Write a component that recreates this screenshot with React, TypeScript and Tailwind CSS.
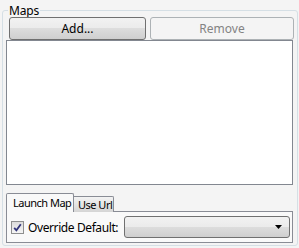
import React from 'react';

const font = { fontFamily: '"Segoe UI", "Noto Sans", "Open Sans", sans-serif' };

const btnFace = 'bg-[linear-gradient(#f2f2f2_0%,#ebebeb_50%,#dddddd_50%,#cfcfcf_100%)]';

export default function App() {
  return (
    <div
      className="w-[299px] h-[248px] bg-[#f4f4f4] text-[12px] text-black overflow-hidden pt-[3px] pl-[2px]"
      style={font}
    >
      <fieldset className="w-[295px] h-[243px] border border-[#d5dfe5] rounded-[3px] px-[3px] pb-[2px]">
        <legend className="ml-[2px] px-[1px] leading-[15px] text-[12px] tracking-[-0.2px]">Maps</legend>
        <div className="flex gap-[4px] pl-[3px] mt-[-1px] h-[23px]">
          <button
            className={`w-[137px] h-[23px] border border-[#707070] rounded-[3px] ${btnFace} leading-[20px] text-[12px]`}
          >
            Add...
          </button>
          <button
            disabled
            className="w-[144px] h-[23px] border border-[#adb2b5] rounded-[3px] bg-[#f4f4f4] text-[#838383] leading-[20px] text-[12px]"
          >
            Remove
          </button>
        </div>
        <div className="w-[287px] h-[145px] bg-white border border-[#828790]" />
        <div className="mt-[8px] w-[287px]">
          <div className="flex items-end h-[19px]">
            <div className="shrink-0 whitespace-nowrap w-[68px] h-[19px] border border-b-0 border-[#898c95] bg-[#f9f9f9] text-[11px] tracking-[-0.5px] leading-[17px] pl-[6px] rounded-t-[2px] relative z-10">
              Launch Map
            </div>
            <div className="shrink-0 whitespace-nowrap w-[40px] h-[16px] border border-l-0 border-b-0 border-[#898c95] bg-[linear-gradient(#f3f3f3,#d5d5d5)] text-[11px] tracking-[-0.5px] leading-[15px] pl-[4px] rounded-tr-[2px]">
              Use Url
            </div>
          </div>
          <div className="h-[32px] border border-[#898c95] bg-[#f9f9f9] -mt-[1px] flex items-center pl-[4px] gap-[4px]">
            <div className="shrink-0 w-[13px] h-[13px] border border-[#8e8f8f] bg-[linear-gradient(#dcdcdc,#f5f5f5)] flex items-center justify-center p-[1px]">
              <svg width="9" height="9" viewBox="0 0 9 9">
                <path d="M1.2 4.8 L3.4 7.3 L7.8 1.2" stroke="#31347a" strokeWidth="1.8" fill="none" />
              </svg>
            </div>
            <span className="shrink-0 whitespace-nowrap w-[92px] text-[12px] leading-[15px] tracking-[-0.4px]">
              Override Default:
            </span>
            <div
              className={`shrink-0 w-[166px] h-[22px] border border-[#707070] rounded-[3px] ${btnFace} flex items-center justify-end pr-[7px]`}
            >
              <svg width="7" height="4" viewBox="0 0 7 4">
                <path d="M0 0 H7 L3.5 4 Z" fill="#000" />
              </svg>
            </div>
          </div>
        </div>
      </fieldset>
    </div>
  );
}
